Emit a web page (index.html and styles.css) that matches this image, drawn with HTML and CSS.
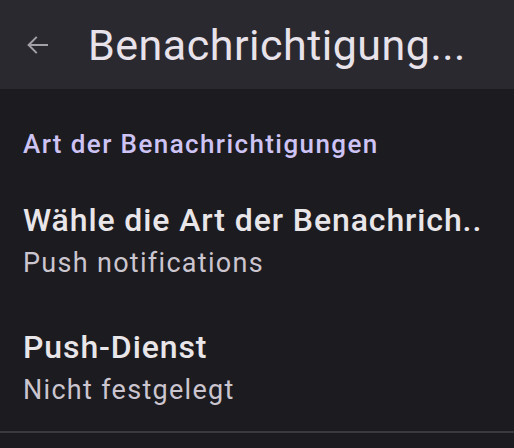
FILE: index.html
```html
<!DOCTYPE html>
<html lang="de">
<head>
<meta charset="utf-8">
<link rel="stylesheet" href="styles.css">
</head>
<body>
<header class="topbar">
  <svg class="back" width="30" height="30" viewBox="0 0 24 24"><path d="M20 12H5M11 5.5L4.5 12l6.5 6.5" fill="none" stroke="currentColor" stroke-width="1.6"/></svg>
  <h1 class="title">Benachrichtigung...</h1>
</header>
<main class="list">
  <div class="section">Art der Benachrichtigungen</div>
  <div class="item first">
    <div class="item-title">Wähle die Art der Benachrich..</div>
    <div class="item-sub">Push notifications</div>
  </div>
  <div class="item second">
    <div class="item-title">Push-Dienst</div>
    <div class="item-sub">Nicht festgelegt</div>
  </div>
  <div class="divider"></div>
</main>
</body>
</html>
```

FILE: styles.css
```css
html, body {
  margin: 0;
  padding: 0;
  background: #1c1b1f;
  font-family: Roboto, "Noto Sans", sans-serif;
  width: 514px;
  height: 448px;
  overflow: hidden;
}
.topbar {
  height: 89px;
  background: #2b2930;
  display: flex;
  align-items: center;
  padding-left: 23px;
  box-sizing: border-box;
}
.back {
  color: #a3a0a8;
  flex: none;
}
.title {
  margin: 0 0 0 35px;
  font-weight: 400;
  font-size: 43px;
  color: #e8e3ea;
  letter-spacing: 0.5px;
  white-space: nowrap;
}
.list {
  padding: 0 0 0 23px;
}
.section {
  padding-top: 39px;
  font-size: 26px;
  font-weight: 500;
  color: #cdc3f4;
  line-height: 32px;
  letter-spacing: 1.4px;
}
.item {
  display: flex;
  flex-direction: column;
}
.first { padding-top: 41px; }
.second { padding-top: 45px; }
.item-title {
  font-size: 32px;
  font-weight: 500;
  color: #e9e6ea;
  line-height: 38px;
  white-space: nowrap;
  letter-spacing: 0.9px;
}
.item-sub {
  margin-top: 4px;
  font-size: 27px;
  color: #cbc5cf;
  line-height: 40px;
  letter-spacing: 1.3px;
}
.divider {
  margin: 21px 0 0 -23px;
  height: 2px;
  background: #3a393d;
}
```
